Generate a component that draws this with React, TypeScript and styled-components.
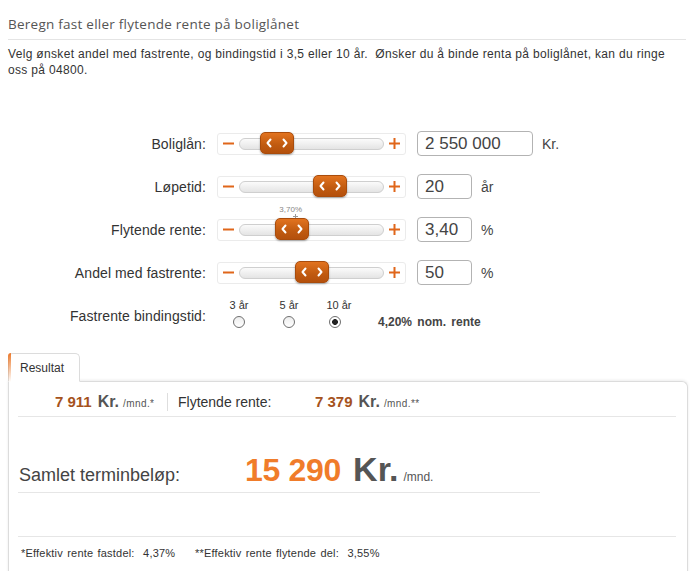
import { Fragment } from "react";
import styled, { createGlobalStyle } from "styled-components";

const GlobalStyle = createGlobalStyle`
  body {
    margin: 0;
    background: #fff;
    font-family: "Liberation Sans", Arial, sans-serif;
    color: #333;
  }
`;

const Page = styled.div`
  width: 680px;
  padding: 0 6px 0 8px;
`;

const Title = styled.h1`
  margin: 0 2px 0 0;
  padding: 15px 0 6px;
  font-family: "Open Sans", "Liberation Sans", sans-serif;
  font-weight: normal;
  font-size: 13.5px;
  letter-spacing: 0.25px;
  line-height: 18px;
  color: #555;
  border-bottom: 1px solid #e4e4e4;
`;

const Intro = styled.p`
  margin: 6px 0 0;
  width: 672px;
  font-size: 12px;
  letter-spacing: 0.33px;
  line-height: 16px;
  color: #333;
`;

const Form = styled.div`
  margin-top: 44px;
  display: grid;
  grid-template-columns: 198px 189px 1fr;
  column-gap: 11px;
  grid-auto-rows: 43px;
  align-items: center;
`;

const Label = styled.div`
  font-size: 14px;
  letter-spacing: 0.1px;
  color: #333;
  text-align: right;
`;

const SliderBox = styled.div`
  height: 22px;
  border: 1px solid #ebebeb;
  border-radius: 3px;
  box-sizing: border-box;
  display: flex;
  align-items: center;
  padding: 0 5px;
  gap: 5px;
`;

const Track = styled.div`
  position: relative;
  flex: 1;
  height: 10px;
  border: 1px solid #cfcfcf;
  border-radius: 6px;
  background: linear-gradient(#fbfbfb, #e4e4e4);
`;

const Handle = styled.div`
  position: absolute;
  top: -7px;
  width: 34px;
  height: 22px;
  box-sizing: border-box;
  border-radius: 5px;
  border: 1px solid #a94c0c;
  background: linear-gradient(#e2731f, #c05a10 60%, #b4500c);
  box-shadow: 0 1px 2px rgba(0, 0, 0, 0.35);
  display: flex;
  align-items: center;
  justify-content: space-between;
  padding: 0 5px;
`;

const Marker = styled.div`
  position: absolute;
  top: -20px;
  display: flex;
  flex-direction: column;
  align-items: flex-end;
`;

const MarkerText = styled.span`
  font-size: 8px;
  line-height: 9px;
  color: #888;
  margin-right: -3px;
`;

const ValueCell = styled.div`
  display: flex;
  align-items: center;
  gap: 9px;
`;

const NumInput = styled.div<{ $wide?: boolean }>`
  width: ${(p) => (p.$wide ? "116px" : "55px")};
  height: 25px;
  box-sizing: border-box;
  border: 1px solid #b3b3b3;
  border-radius: 4px;
  padding-left: 7px;
  font-size: 17px;
  line-height: 23px;
  color: #444;
`;

const Unit = styled.div`
  font-size: 14px;
  color: #444;
`;

const RadioRow = styled.div`
  grid-column: 2 / 4;
  display: flex;
  align-items: center;
  margin-left: -3px;
  height: 40px;
`;

const RadioItem = styled.div`
  width: 50px;
  display: flex;
  flex-direction: column;
  align-items: center;
  gap: 5px;
  margin-top: -4px;
  font-size: 11px;
  color: #333;
`;

const RadioCircle = styled.span<{ $on?: boolean; $shift?: number }>`
  width: 12px;
  height: 12px;
  box-sizing: border-box;
  border-radius: 50%;
  border: 1px solid #6f6f6f;
  background: ${(p) =>
    p.$on
      ? "radial-gradient(circle at 50% 50%, #222 0 2.6px, #fff 3.2px)"
      : "linear-gradient(#ededed, #fff)"};
  margin-left: ${(p) => p.$shift ?? 0}px;
`;

const Nominal = styled.div`
  margin-left: 14px;
  margin-top: 12px;
  font-size: 12px;
  font-weight: bold;
  color: #444;
  word-spacing: 2px;
`;

const ResultWrap = styled.div`
  margin-top: 16px;
`;

const Tab = styled.div`
  position: relative;
  z-index: 1;
  width: 72px;
  height: 29px;
  box-sizing: border-box;
  border: 1px solid #dcdcdc;
  border-bottom: 1px solid #fff;
  border-radius: 5px 5px 0 0;
  margin-bottom: -1px;
  background: #fff;
  font-size: 12px;
  line-height: 28px;
  padding-left: 11px;
  color: #333;
  &::before {
    content: "";
    position: absolute;
    left: -1px;
    top: -1px;
    width: 3px;
    height: 29px;
    border-radius: 3px 0 0 0;
    background: linear-gradient(#ec7a2c, rgba(240, 130, 50, 0));
  }
`;

const Panel = styled.div`
  border: 1px solid #dcdcdc;
  border-bottom: none;
  border-radius: 0 6px 0 0;
  box-shadow: 0 -1px 3px rgba(0, 0, 0, 0.08);
  padding: 11px 11px 20px 9px;
  min-height: 180px;
`;

const SummaryRow = styled.div`
  display: flex;
  align-items: center;
  height: 18px;
  padding: 0 0 5px;
  border-bottom: 1px solid #e6e6e6;
`;

const SubAmount = styled.div<{ $w?: number; $indent?: number }>`
  display: flex;
  align-items: baseline;
  width: ${(p) => (p.$w ? `${p.$w}px` : "auto")};
  padding-left: ${(p) => p.$indent ?? 0}px;
  box-sizing: border-box;
`;

const Amount = styled.span`
  font-size: 15px;
  font-weight: bold;
  color: #a5521c;
  margin-right: 6px;
`;

const Kr = styled.span<{ $big?: boolean }>`
  font-size: ${(p) => (p.$big ? "34px" : "16px")};
  font-weight: bold;
  color: #555;
`;

const PerMonth = styled.span<{ $big?: boolean }>`
  font-size: ${(p) => (p.$big ? "12px" : "10px")};
  letter-spacing: ${(p) => (p.$big ? "0" : "0.4px")};
  color: #555;
  margin-left: ${(p) => (p.$big ? "5px" : "4px")};
`;

const Sep = styled.div`
  width: 1px;
  height: 18px;
  background: #dedede;
  margin-right: 10px;
`;

const FloatLabel = styled.div`
  width: 137px;
  font-size: 14px;
  color: #333;
`;

const TotalRow = styled.div`
  display: flex;
  align-items: baseline;
  width: 522px;
  margin-top: 33px;
  padding-bottom: 3px;
  border-bottom: 1px solid #e6e6e6;
`;

const TotalLabel = styled.div`
  width: 226px;
  padding-left: 1px;
  font-size: 18px;
  color: #444;
`;

const TotalAmount = styled.span`
  font-size: 32px;
  font-weight: bold;
  color: #f07c2a;
  margin-right: 12px;
  letter-spacing: -0.3px;
`;

const Footer = styled.div`
  margin-top: 43px;
  border-top: 1px solid #e6e6e6;
  padding: 10px 0 0 3px;
  display: flex;
  font-size: 11px;
  letter-spacing: 0.2px;
  color: #333;
`;

const Note = styled.span<{ $w?: number }>`
  width: ${(p) => (p.$w ? `${p.$w}px` : "auto")};
  word-spacing: 1px;
`;

function Chevron({ dir }: { dir: "l" | "r" }) {
  return (
    <svg width="6" height="10" viewBox="0 0 6 10">
      <polyline
        points={dir === "l" ? "4.5,1.5 1.5,5 4.5,8.5" : "1.5,1.5 4.5,5 1.5,8.5"}
        fill="none"
        stroke="#fff"
        strokeWidth="2"
        strokeLinecap="round"
        strokeLinejoin="round"
      />
    </svg>
  );
}

function Minus() {
  return (
    <svg width="11" height="11" viewBox="0 0 11 11">
      <rect x="0" y="4.5" width="11" height="2" fill="#e0661a" />
    </svg>
  );
}

function Plus() {
  return (
    <svg width="11" height="11" viewBox="0 0 11 11">
      <rect x="0" y="4.5" width="11" height="2" fill="#e0661a" />
      <rect x="4.5" y="0" width="2" height="11" fill="#e0661a" />
    </svg>
  );
}

function TickMark() {
  return (
    <svg width="7" height="6" viewBox="0 0 7 6">
      <rect x="3" y="0" width="1" height="6" fill="#9a9a9a" />
      <rect x="1" y="2" width="5" height="1" fill="#9a9a9a" />
    </svg>
  );
}

type SliderProps = { pos: number; marker?: { at: number; text: string } };

function Slider({ pos, marker }: SliderProps) {
  return (
    <SliderBox>
      <Minus />
      <Track>
        {marker && (
          <Marker style={{ right: `calc(100% - ${marker.at + 4}px)` }}>
            <MarkerText>{marker.text}</MarkerText>
            <TickMark />
          </Marker>
        )}
        <Handle style={{ left: pos }}>
          <Chevron dir="l" />
          <Chevron dir="r" />
        </Handle>
      </Track>
      <Plus />
    </SliderBox>
  );
}

const rows = [
  { label: "Boliglån:", pos: 20, value: "2 550 000", unit: "Kr.", wide: true },
  { label: "Løpetid:", pos: 73, value: "20", unit: "år" },
  {
    label: "Flytende rente:",
    pos: 35,
    value: "3,40",
    unit: "%",
    marker: { at: 55, text: "3,70%" },
  },
  { label: "Andel med fastrente:", pos: 55, value: "50", unit: "%" },
];

const terms = [
  { text: "3 år", on: false, shift: 0 },
  { text: "5 år", on: false, shift: -1 },
  { text: "10 år", on: true, shift: -8 },
];

export default function App() {
  return (
    <Page>
      <GlobalStyle />
      <Title>Beregn fast eller flytende rente på boliglånet</Title>
      <Intro>
        Velg ønsket andel med fastrente, og bindingstid i 3,5 eller 10 år.&nbsp; Ønsker du å
        binde renta på boliglånet, kan du ringe oss på 04800.
      </Intro>

      <Form>
        {rows.map((r) => (
          <Fragment key={r.label}>
            <Label>{r.label}</Label>
            <Slider pos={r.pos} marker={r.marker} />
            <ValueCell>
              <NumInput $wide={r.wide}>{r.value}</NumInput>
              <Unit>{r.unit}</Unit>
            </ValueCell>
          </Fragment>
        ))}
        <Label>Fastrente bindingstid:</Label>
        <RadioRow>
          {terms.map((t) => (
            <RadioItem key={t.text}>
              {t.text}
              <RadioCircle $on={t.on} $shift={t.shift} />
            </RadioItem>
          ))}
          <Nominal>4,20% nom. rente</Nominal>
        </RadioRow>
      </Form>

      <ResultWrap>
        <Tab>Resultat</Tab>
        <Panel>
          <SummaryRow>
            <SubAmount $w={149} $indent={37}>
              <Amount>7 911</Amount>
              <Kr>Kr.</Kr>
              <PerMonth>/mnd.*</PerMonth>
            </SubAmount>
            <Sep />
            <FloatLabel>Flytende rente:</FloatLabel>
            <SubAmount>
              <Amount>7 379</Amount>
              <Kr>Kr.</Kr>
              <PerMonth>/mnd.**</PerMonth>
            </SubAmount>
          </SummaryRow>

          <TotalRow>
            <TotalLabel>Samlet terminbeløp:</TotalLabel>
            <TotalAmount>15 290</TotalAmount>
            <Kr $big>Kr.</Kr>
            <PerMonth $big>/mnd.</PerMonth>
          </TotalRow>

          <Footer>
            <Note $w={174}>*Effektiv rente fastdel:&nbsp; 4,37%</Note>
            <Note>**Effektiv rente flytende del:&nbsp; 3,55%</Note>
          </Footer>
        </Panel>
      </ResultWrap>
    </Page>
  );
}
